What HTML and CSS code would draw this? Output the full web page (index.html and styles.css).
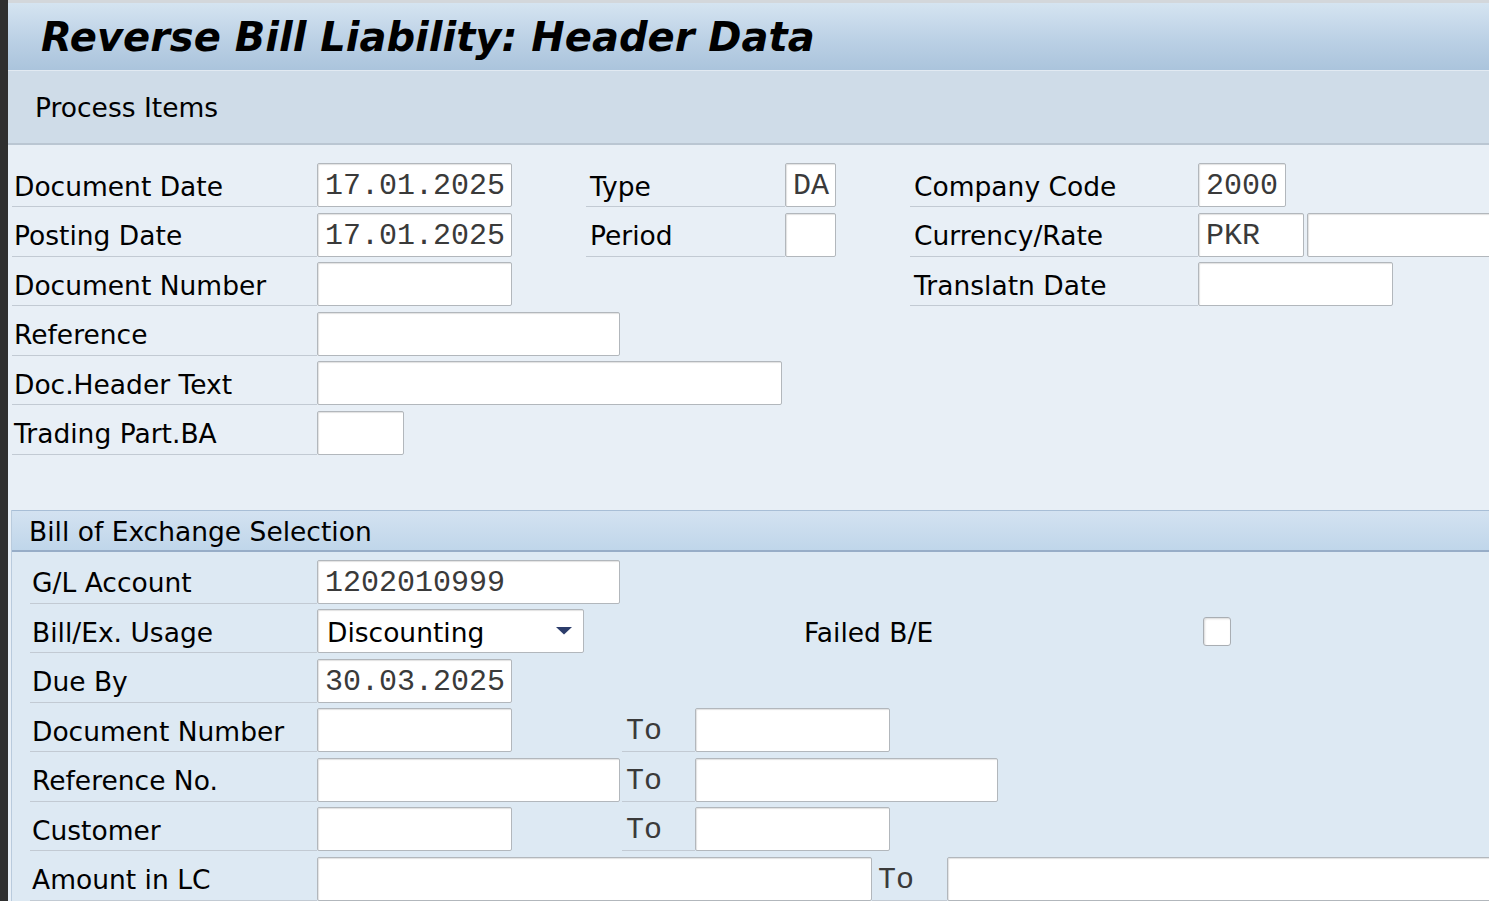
FILE: index.html
```html
<!DOCTYPE html>
<html>
<head>
<meta charset="utf-8">
<title>Reverse Bill Liability: Header Data</title>
<link rel="stylesheet" href="styles.css">
</head>
<body>
<div class="app">
  <div class="strip"></div>
  <div class="screen">
    <div class="titlebar"><h1 class="title">Reverse Bill Liability: Header Data</h1></div>
    <div class="toolbar"><span class="tool">Process Items</span></div>
    <div class="main">
      <div class="grid">
        <div class="lbl c1">Document Date</div>
        <div class="c2"><div class="inp w195">17.01.2025</div></div>
        <div class="lbl c3">Type</div>
        <div class="c4"><div class="inp w51">DA</div></div>
        <div class="lbl c5">Company Code</div>
        <div class="c6"><div class="inp w88">2000</div></div>

        <div class="lbl c1">Posting Date</div>
        <div class="c2"><div class="inp w195">17.01.2025</div></div>
        <div class="lbl c3">Period</div>
        <div class="c4"><div class="inp w51"></div></div>
        <div class="lbl c5">Currency/Rate</div>
        <div class="c6 pair"><div class="inp w106">PKR</div><div class="inp w240"></div></div>

        <div class="lbl c1">Document Number</div>
        <div class="c2"><div class="inp w195"></div></div>
        <div class="lbl c5">Translatn Date</div>
        <div class="c6"><div class="inp w195"></div></div>

        <div class="lbl c1">Reference</div>
        <div class="c2 span"><div class="inp w303"></div></div>

        <div class="lbl c1">Doc.Header Text</div>
        <div class="c2 span"><div class="inp w465"></div></div>

        <div class="lbl c1">Trading Part.BA</div>
        <div class="c2"><div class="inp w87"></div></div>
      </div>

      <div class="section">
        <div class="sec-head">Bill of Exchange Selection</div>
        <div class="sec-body">
          <div class="row">
            <div class="lbl slbl">G/L Account</div>
            <div class="inp w303">1202010999</div>
          </div>
          <div class="row">
            <div class="lbl slbl">Bill/Ex. Usage</div>
            <div class="inp dd w267"><span>Discounting</span>
              <svg class="arrow" width="16" height="8" viewBox="0 0 16 8"><path d="M0 0H16L8 7.5Z" fill="#2c3d6b"/></svg>
            </div>
            <div class="plain failed">Failed B/E</div>
            <div class="check"></div>
          </div>
          <div class="row">
            <div class="lbl slbl">Due By</div>
            <div class="inp w195">30.03.2025</div>
          </div>
          <div class="row">
            <div class="lbl slbl">Document Number</div>
            <div class="zone"><div class="inp w195"></div></div>
            <div class="lbl to">To</div>
            <div class="inp w195"></div>
          </div>
          <div class="row">
            <div class="lbl slbl">Reference No.</div>
            <div class="zone"><div class="inp w303"></div></div>
            <div class="lbl to">To</div>
            <div class="inp w303"></div>
          </div>
          <div class="row">
            <div class="lbl slbl">Customer</div>
            <div class="zone"><div class="inp w195"></div></div>
            <div class="lbl to">To</div>
            <div class="inp w195"></div>
          </div>
          <div class="row">
            <div class="lbl slbl">Amount in LC</div>
            <div class="inp w555"></div>
            <div class="lbl to to-wide">To</div>
            <div class="inp w600"></div>
          </div>
        </div>
      </div>
    </div>
  </div>
</div>
</body>
</html>
```

FILE: styles.css
```css
html, body {
  margin: 0;
  padding: 0;
  width: 1489px;
  height: 901px;
  overflow: hidden;
  background: #e8eff6;
}

.app {
  display: flex;
  width: 1489px;
  height: 901px;
  font-family: "DejaVu Sans", Verdana, sans-serif;
  color: #000;
}

.strip {
  width: 8px;
  flex: none;
  background: #2f2f2f;
}

.screen {
  flex: 1;
  min-width: 0;
  overflow: hidden;
  background: #e8eff6;
}

.titlebar {
  height: 67px;
  border-top: 3px solid #d3d7db;
  border-bottom: 1px solid #e2eaf2;
  background: linear-gradient(#d5e4f1, #b9cfe4 60%, #abc4dc);
  display: flex;
  align-items: center;
  padding-left: 33px;
}

.title {
  margin: 0;
  font-family: "DejaVu Sans", Verdana, sans-serif;
  font-weight: bold;
  font-style: italic;
  font-size: 40px;
  color: #000;
  white-space: nowrap;
}

.toolbar {
  height: 72px;
  background: #cfdce8;
  border-bottom: 2px solid #bac6d2;
  display: flex;
  align-items: center;
  padding-left: 27px;
}

.tool {
  font-size: 26.5px;
}

.main {
  padding: 18px 0 0 3px;
}

.grid {
  margin-left: 1px;
  display: grid;
  grid-template-columns: 305px 269px 199px 125px 288px 1fr;
  grid-auto-rows: 44px;
  row-gap: 5.5px;
}

.c1 { grid-column: 1; }
.c2 { grid-column: 2; }
.c3 { grid-column: 3; }
.c4 { grid-column: 4; }
.c5 { grid-column: 5; }
.c6 { grid-column: 6; }
.span { grid-column: 2 / span 4; }

.pair {
  display: flex;
  gap: 3px;
}

.lbl {
  box-sizing: border-box;
  height: 44px;
  border-bottom: 1px solid #c2cad3;
  display: flex;
  align-items: center;
  padding-top: 3px;
  padding-left: 2px;
  font-size: 26.5px;
  white-space: nowrap;
}

.c3, .c5 { padding-left: 4px; }

.inp {
  box-sizing: border-box;
  height: 44px;
  background: #fff;
  border: 1px solid #b2b7bc;
  border-radius: 2px;
  box-shadow: inset 1px 1px 1px rgba(0, 0, 0, 0.12);
  font-family: "Liberation Mono", "Courier New", monospace;
  font-size: 30px;
  color: #3a3a3a;
  display: flex;
  align-items: center;
  padding: 2px 0 0 7px;
  white-space: nowrap;
  flex: none;
}

.w51 { width: 51px; }
.w87 { width: 87px; }
.w88 { width: 88px; }
.w106 { width: 106px; }
.w195 { width: 195px; }
.w240 { width: 240px; }
.w267 { width: 267px; }
.w303 { width: 303px; }
.w465 { width: 465px; }
.w555 { width: 555px; }
.w600 { width: 600px; }

.section {
  margin-top: 55px;
  border-left: 1px solid #b9cbdd;
}

.sec-head {
  box-sizing: border-box;
  height: 42px;
  border-top: 1px solid #a8bed6;
  border-bottom: 2px solid #97adc7;
  background: linear-gradient(#d3e2f1, #c0d6ea);
  display: flex;
  align-items: center;
  padding: 2px 0 0 17px;
  font-size: 26.5px;
}

.sec-body {
  background: #dde9f3;
  padding: 8px 0 0 18px;
  height: 360px;
  display: flex;
  flex-direction: column;
  gap: 5.5px;
}

.row {
  display: flex;
  height: 44px;
  flex: none;
}

.slbl {
  width: 287px;
  flex: none;
}

.zone {
  width: 305px;
  flex: none;
}

.to {
  width: 73px;
  flex: none;
  font-family: "Liberation Mono", "Courier New", monospace;
  font-size: 30px;
  color: #3a3a3a;
  padding-left: 4px;
}

.to-wide {
  width: 75px;
  padding-left: 6px;
}

.dd {
  font-family: "DejaVu Sans", Verdana, sans-serif;
  font-size: 26.5px;
  color: #000;
  padding-left: 9px;
  justify-content: space-between;
  padding-right: 11px;
}

.arrow {
  display: block;
  margin-top: -2px;
}

.plain {
  display: flex;
  align-items: center;
  padding-top: 3px;
  font-size: 26.5px;
  white-space: nowrap;
}

.failed {
  margin-left: 220px;
  width: 399px;
  flex: none;
}

.check {
  align-self: center;
  box-sizing: border-box;
  width: 28px;
  height: 29px;
  background: #fff;
  border: 1px solid #a9aeb3;
  border-radius: 3px;
  box-shadow: inset 1px 1px 2px rgba(0, 0, 0, 0.15);
  margin-top: 1px;
}
```
